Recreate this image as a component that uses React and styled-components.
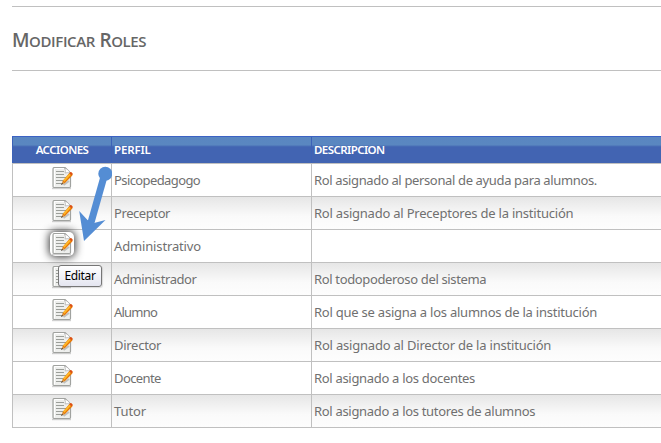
import React from "react";
import styled, { createGlobalStyle, css } from "styled-components";

const GlobalStyle = createGlobalStyle`
  body {
    margin: 0;
    background: #fff;
    overflow: hidden;
    font-family: "Noto Sans", "Open Sans", sans-serif;
  }
`;

const Page = styled.main`
  position: relative;
  box-sizing: border-box;
  height: 443px;
  padding: 6px 0 0 12px;
  overflow: hidden;
`;

const TitleBar = styled.header`
  box-sizing: border-box;
  height: 65px;
  display: flex;
  align-items: center;
  padding-top: 4px;
  border-top: 1px solid #c0c0c0;
  border-bottom: 1px solid #c0c0c0;
`;

const Title = styled.h1`
  margin: 0;
  font-family: "Open Sans", sans-serif;
  font-size: 15px;
  line-height: 24px;
  font-weight: 600;
  text-transform: uppercase;
  letter-spacing: -0.4px;
  word-spacing: 1px;
  color: #666;
  white-space: pre;

  span::first-letter {
    font-size: 19px;
  }

  span {
    display: inline-block;
  }
`;

const Table = styled.section`
  margin-top: 65px;
  width: 700px;
`;

const columns = css`
  display: grid;
  grid-template-columns: 99px 200px 401px;
  box-sizing: border-box;
`;

const HeaderRow = styled.div`
  ${columns}
  height: 27px;
  border-top: 1px solid #3c62c4;
  background: linear-gradient(#5a86c1 0, #5a87c0 8px, #4a70b6 9px, #4264b2 10px, #4264b2 100%);
`;

const HeaderCell = styled.div`
  display: flex;
  align-items: center;
  justify-content: ${(p) => (p.$center ? "center" : "flex-start")};
  padding: 0 ${(p) => (p.$center ? 2 : 0)}px 1px 2px;
  border-left: 1px solid #3c62b8;
  color: #fff;
  font-size: 11.5px;
  font-weight: 600;
  white-space: nowrap;
  letter-spacing: ${(p) => p.$tracking || 0}px;
`;

const Row = styled.div`
  ${columns}
  height: 33px;
  border-top: 1px solid #c0c0c0;
  background: ${(p) => (p.$striped ? "linear-gradient(#e6e6e6, #fafafa 60%, #fdfdfd)" : "#fff")};

  &:last-child {
    height: 34px;
    border-bottom: 1px solid #c0c0c0;
  }
`;

const Cell = styled.div`
  display: flex;
  align-items: center;
  padding: 0 0 0 2px;
  border-left: 1px solid #c0c0c0;
  color: #707070;
  font-size: 13px;
  line-height: 18px;
  white-space: nowrap;
  letter-spacing: ${(p) => p.$tracking || 0}px;
`;

const ActionCell = styled(Cell)`
  align-items: flex-start;
  padding: 2px 0 0 37px;
`;

const EditButton = styled.button`
  display: block;
  width: 24px;
  height: 24px;
  margin: 0;
  padding: 1px 2px;
  border: 0;
  border-radius: 5px;
  background: ${(p) => (p.$active ? "#fff" : "transparent")};
  box-shadow: ${(p) => (p.$active ? "0 0 8px 1px #333" : "none")};

  svg {
    display: block;
  }
`;

const Arrow = styled.svg`
  position: absolute;
  left: 76px;
  top: 164px;
`;

const Tooltip = styled.div`
  position: absolute;
  left: 58px;
  top: 265px;
  box-sizing: border-box;
  width: 44px;
  height: 22px;
  border: 1px solid #767676;
  border-radius: 3px;
  background: linear-gradient(#fff, #e4e5f0);
  box-shadow: 1px 1px 1px rgba(0, 0, 0, 0.12);
  color: #000;
  font-size: 12px;
  line-height: 20px;
  letter-spacing: -0.35px;
  text-align: center;
`;

function EditIcon() {
  return (
    <svg width="21" height="23" viewBox="0 0 21 23" aria-hidden="true">
      <path d="M0 21.5H19" stroke="#777" strokeOpacity=".35" strokeWidth="1.4" />
      <path
        d="M2.5 .5H13L18.5 6V19.4Q18.5 20.5 17 20.5H2.4Q1 20.5 1 19.4V2.1Q1 .5 2.5 .5Z"
        fill="#eeefed"
        stroke="#a0a29f"
        strokeWidth="1.2"
      />
      <path d="M2.5 19.5V1.5H12.5" fill="none" stroke="#fff" />
      <path d="M12.4 1.2Q14 3 13.2 6Q16 5 18 6.4Q17.4 2.5 12.4 1.2Z" fill="#fff" stroke="#aaa" strokeWidth=".7" />
      <path d="M4 4.5H12M4 7.5H12M4 10.5H15M4 13.5H12M4 16.5H9" stroke="#9b9e99" />
      <path d="M11.5 18L17 14" stroke="#000" strokeOpacity=".2" strokeWidth="2" />
      <path d="M9.6 17.2L11 13.5L17.2 6.3Q18.4 4.6 20 5.8Q21.3 7.1 20.1 8.7L13 16Z" fill="#e87808" />
      <path d="M11.8 14.2L18 7.4" stroke="#ffb928" strokeWidth="1.8" />
      <path d="M18 5.5Q19.3 4.9 20.4 6.4L19.9 8.3L17.6 6.2Z" fill="#db4b1c" />
      <path d="M9.4 17.4L10.7 14.3L12.6 15.9Z" fill="#d39a50" />
      <path d="M9 17.8L9.8 16L11.1 17Z" fill="#171717" />
    </svg>
  );
}

const roles = [
  { name: "Psicopedagogo", nameTracking: -0.6, description: "Rol asignado al personal de ayuda para alumnos.", tracking: -0.36 },
  { name: "Preceptor", nameTracking: -0.42, description: "Rol asignado al Preceptores de la institución", tracking: -0.22 },
  { name: "Administrativo", nameTracking: -0.15, description: "", active: true },
  { name: "Administrador", nameTracking: -0.4, description: "Rol todopoderoso del sistema", tracking: -0.35 },
  { name: "Alumno", nameTracking: -0.8, description: "Rol que se asigna a los alumnos de la institución", tracking: -0.23 },
  { name: "Director", nameTracking: -0.28, description: "Rol asignado al Director de la institución", tracking: -0.2 },
  { name: "Docente", nameTracking: -0.6, description: "Rol asignado a los docentes", tracking: -0.31 },
  { name: "Tutor", nameTracking: -0.1, description: "Rol asignado a los tutores de alumnos", tracking: -0.31 },
];

export default function App() {
  return (
    <Page>
      <GlobalStyle />
      <TitleBar>
        <Title>
          <span>Modificar</span> <span>Roles</span>
        </Title>
      </TitleBar>
      <Table>
        <HeaderRow>
          <HeaderCell $center $tracking={-0.55}>ACCIONES</HeaderCell>
          <HeaderCell $tracking={-0.15}>PERFIL</HeaderCell>
          <HeaderCell $tracking={-0.58}>DESCRIPCION</HeaderCell>
        </HeaderRow>
        {roles.map((role, index) => (
          <Row key={role.name} $striped={index % 2 === 1}>
            <ActionCell>
              <EditButton $active={role.active} aria-label="Editar">
                <EditIcon />
              </EditButton>
            </ActionCell>
            <Cell $tracking={role.nameTracking}>{role.name}</Cell>
            <Cell $tracking={role.tracking}>{role.description}</Cell>
          </Row>
        ))}
      </Table>
      <Arrow width="36" height="80" viewBox="0 0 36 80" aria-hidden="true">
        <path d="M29 9L14.3 61" stroke="#548dd4" strokeWidth="7" />
        <circle cx="29.3" cy="9.7" r="7" fill="#548dd4" />
        <path d="M3.2 47L11.5 56L18 59L29.5 56L8 77Z" fill="#548dd4" />
      </Arrow>
      <Tooltip role="tooltip">Editar</Tooltip>
    </Page>
  );
}
